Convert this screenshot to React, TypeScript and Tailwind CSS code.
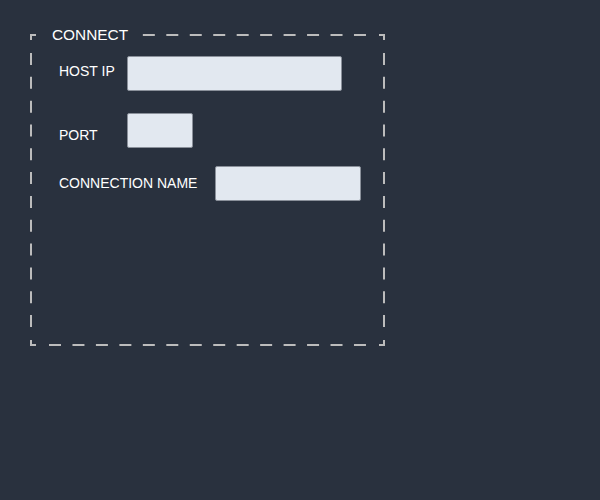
const inputClass =
  "h-[35px] rounded-[2px] border border-[#8a909a] bg-[#e2e8f0] outline-none";

function DashedFrame() {
  const stroke = "#bcbcbc";
  return (
    <svg
      className="pointer-events-none absolute inset-0"
      width="355"
      height="312"
      viewBox="0 0 355 312"
      fill="none"
    >
      <g stroke={stroke} strokeWidth="2" strokeLinejoin="miter">
        {/* corners */}
        <path d="M1 6 V1 H6" />
        <path d="M349 1 H354 V6" />
        <path d="M1 306 V311 H6" />
        <path d="M349 311 H354 V306" />
        {/* edges */}
        <path d="M19 1 H336" strokeDasharray="12 11.46" />
        <path d="M19 311 H336" strokeDasharray="12 11.46" />
        <path d="M1 19 V293" strokeDasharray="12 11.82" />
        <path d="M354 19 V293" strokeDasharray="12 11.82" />
      </g>
    </svg>
  );
}

export default function App() {
  return (
    <div className="h-[500px] w-[600px] bg-[#29313e] pt-[34px] pl-[30px] font-['Liberation_Sans',Arial,sans-serif] text-white">
      <div className="relative h-[312px] w-[355px]">
        <DashedFrame />
        <span className="absolute left-[18px] top-[-8px] bg-[#29313e] px-[4px] text-[15.4px] leading-[18px]">
          CONNECT
        </span>
        <div className="flex flex-col pt-[22px] pl-[29px] text-[14px] leading-[16px]">
          <div className="flex items-start">
            <label className="mt-[7px] w-[68px]">HOST IP</label>
            <input type="text" className={`${inputClass} w-[215px]`} />
          </div>
          <div className="mt-[22px] flex items-start">
            <label className="mt-[14px] w-[68px]">PORT</label>
            <input type="text" className={`${inputClass} w-[66px]`} />
          </div>
          <div className="mt-[18px] flex items-start">
            <label className="mt-[9px] w-[156px]">CONNECTION NAME</label>
            <input type="text" className={`${inputClass} w-[146px]`} />
          </div>
        </div>
      </div>
    </div>
  );
}
